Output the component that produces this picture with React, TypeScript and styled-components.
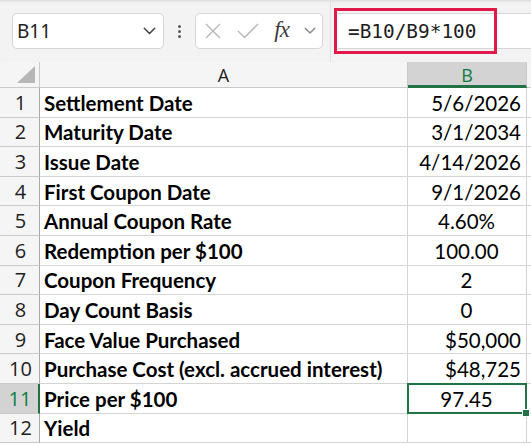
import React from "react";
import styled, { createGlobalStyle } from "styled-components";

const Global = createGlobalStyle`
  html, body { margin: 0; padding: 0; background: #ffffff; overflow: hidden; }
  #root { width: 531px; height: 446px; overflow: hidden; }
`;

const Page = styled.div`
  width: 531px;
  height: 446px;
  display: flex;
  flex-direction: column;
  background: #fff;
`;

const Toolbar = styled.div`
  height: 62px;
  flex: none;
  display: flex;
  align-items: center;
  background: #f3f3f3;
  box-shadow: inset 0 3px 3px -2px rgba(0, 0, 0, 0.12);
  padding-left: 12px;
  position: relative;
`;

const Box = styled.div<{ $w: number }>`
  width: ${(p) => p.$w}px;
  height: 36px;
  box-sizing: border-box;
  background: #fff;
  border: 1px solid #d6d6d6;
  border-radius: 5px;
  display: flex;
  align-items: center;
  flex: none;
`;

const NameText = styled.span`
  font-family: "Noto Sans", "Open Sans", sans-serif;
  font-size: 19px;
  color: #222;
  padding-left: 4px;
  flex: 1;
`;

const Dots = styled.div`
  width: 31px;
  display: flex;
  flex-direction: column;
  align-items: center;
  gap: 2px;
  flex: none;
  & > i {
    width: 3px;
    height: 3px;
    border-radius: 50%;
    background: #5a5a5a;
    display: block;
  }
`;

const FuncBox = styled(Box)`
  justify-content: space-between;
  padding: 0 6px 0 8px;
`;

const Fx = styled.span`
  font-family: "Liberation Serif", "DejaVu Serif", serif;
  font-style: italic;
  font-size: 23px;
  color: #3c3c3c;
  letter-spacing: -1px;
  margin-top: -3px;
`;

const Separator = styled.div`
  width: 1px;
  align-self: stretch;
  background: #e2e2e2;
  margin: 0 3px 0 7px;
  flex: none;
`;

const FormulaBox = styled(Box)`
  flex: 1;
  border-right: none;
  border-radius: 5px 0 0 5px;
  position: relative;
  width: auto;
`;

const Highlight = styled.div`
  position: absolute;
  left: -1px;
  top: -6px;
  width: 163px;
  height: 46px;
  box-sizing: border-box;
  border: 3px solid #e0194a;
  display: flex;
  align-items: center;
  padding-left: 11px;
  font-family: "DejaVu Sans Mono", "Liberation Mono", monospace;
  font-size: 19.4px;
  color: #1e1e1e;
`;

const Grid = styled.div`
  display: grid;
  grid-template-columns: 40px 368px 119px 4px;
  grid-template-rows: 26px;
  grid-auto-rows: 29.6px;
  font-family: "Lato", "Open Sans", sans-serif;
`;

const Corner = styled.div`
  background: #f5f5f5;
  border-right: 1px solid #c9c9c9;
  border-bottom: 1px solid #c9c9c9;
  box-sizing: border-box;
  position: relative;
  &::after {
    content: "";
    position: absolute;
    right: 4px;
    bottom: 4px;
    width: 0;
    height: 0;
    border-left: 18px solid transparent;
    border-bottom: 17px solid #b6b6b6;
  }
`;

const ColHead = styled.div<{ $sel?: boolean }>`
  box-sizing: border-box;
  background: ${(p) => (p.$sel ? "#d3d3d3" : "#f5f5f5")};
  border-right: 1px solid #c9c9c9;
  border-bottom: ${(p) => (p.$sel ? "3px solid #217346" : "1px solid #c9c9c9")};
  display: flex;
  align-items: center;
  justify-content: center;
  font-family: "Open Sans", "Noto Sans", sans-serif;
  font-size: 18px;
  color: ${(p) => (p.$sel ? "#107c41" : "#1e1e1e")};
  padding-top: ${(p) => (p.$sel ? "2px" : "0")};
`;

const RowHead = styled.div<{ $sel?: boolean }>`
  box-sizing: border-box;
  background: ${(p) => (p.$sel ? "#d3d3d3" : "#f5f5f5")};
  border-right: ${(p) => (p.$sel ? "2px solid #217346" : "1px solid #a9a9a9")};
  border-bottom: 1px solid #c9c9c9;
  display: flex;
  align-items: center;
  justify-content: center;
  font-family: "Open Sans", "Noto Sans", sans-serif;
  font-size: 20px;
  color: ${(p) => (p.$sel ? "#107c41" : "#1e1e1e")};
  padding-left: 2px;
`;

const Cell = styled.div<{ $align?: "left" | "right" | "center"; $bold?: boolean }>`
  box-sizing: border-box;
  border-right: 1px solid #d4d4d4;
  border-bottom: 1px solid #d4d4d4;
  display: flex;
  align-items: center;
  justify-content: ${(p) =>
    p.$align === "right" ? "flex-end" : p.$align === "center" ? "center" : "flex-start"};
  padding: 1px 5px 0 4px;
  font-size: 20.5px;
  font-weight: ${(p) => (p.$bold ? 700 : 400)};
  color: #000;
  white-space: nowrap;
  overflow: hidden;
`;

const SelCell = styled(Cell)`
  border: 2px solid #217346;
  position: relative;
  overflow: visible;
  margin: -1px 0 0 -1px;
  &::after {
    content: "";
    position: absolute;
    right: -5px;
    bottom: -5px;
    width: 6px;
    height: 6px;
    background: #217346;
    border: 1px solid #fff;
  }
`;

const Edge = styled.div`
  border-bottom: 1px solid #d4d4d4;
  box-sizing: border-box;
`;

const HeadEdge = styled.div`
  background: #f5f5f5;
  border-bottom: 1px solid #c9c9c9;
  box-sizing: border-box;
`;

type Row = { label: string; value: string; align: "left" | "right" | "center" };

const rows: Row[] = [
  { label: "Settlement Date", value: "5/6/2026", align: "right" },
  { label: "Maturity Date", value: "3/1/2034", align: "right" },
  { label: "Issue Date", value: "4/14/2026", align: "right" },
  { label: "First Coupon Date", value: "9/1/2026", align: "right" },
  { label: "Annual Coupon Rate", value: "4.60%", align: "center" },
  { label: "Redemption per $100", value: "100.00", align: "center" },
  { label: "Coupon Frequency", value: "2", align: "center" },
  { label: "Day Count Basis", value: "0", align: "center" },
  { label: "Face Value Purchased", value: "$50,000", align: "right" },
  { label: "Purchase Cost (excl. accrued interest)", value: "$48,725", align: "right" },
  { label: "Price per $100", value: "97.45", align: "center" },
  { label: "Yield", value: "", align: "center" },
];

const Chevron = ({ color, size }: { color: string; size: number }) => (
  <svg width={size} height={size * 0.6} viewBox="0 0 10 6" fill="none">
    <path d="M1 1l4 4 4-4" stroke={color} strokeWidth="1.2" strokeLinecap="round" strokeLinejoin="round" />
  </svg>
);

export default function App() {
  return (
    <Page>
      <Global />
      <Toolbar>
        <Box $w={152}>
          <NameText>B11</NameText>
          <span style={{ marginRight: 7, display: "flex" }}>
            <Chevron color="#444" size={13} />
          </span>
        </Box>
        <Dots>
          <i />
          <i />
          <i />
        </Dots>
        <FuncBox $w={128}>
          <svg width="18" height="18" viewBox="0 0 18 18" fill="none">
            <path d="M2 2l14 14M16 2L2 16" stroke="#b5b5b5" strokeWidth="1.3" />
          </svg>
          <svg width="22" height="16" viewBox="0 0 22 16" fill="none">
            <path d="M1 8l6.5 6.5L21 1" stroke="#b5b5b5" strokeWidth="1.3" />
          </svg>
          <Fx>fx</Fx>
          <Chevron color="#8a8a8a" size={12} />
        </FuncBox>
        <Separator />
        <FormulaBox $w={0}>
          <Highlight>=B10/B9*100</Highlight>
        </FormulaBox>
      </Toolbar>
      <Grid>
        <Corner />
        <ColHead>A</ColHead>
        <ColHead $sel>B</ColHead>
        <HeadEdge />
        {rows.map((r, i) => {
          const sel = i === 10;
          return (
            <React.Fragment key={i}>
              <RowHead $sel={sel}>{i + 1}</RowHead>
              <Cell $bold>{r.label}</Cell>
              {sel ? (
                <SelCell $align={r.align}>{r.value}</SelCell>
              ) : (
                <Cell $align={r.align}>{r.value}</Cell>
              )}
              <Edge />
            </React.Fragment>
          );
        })}
      </Grid>
    </Page>
  );
}
